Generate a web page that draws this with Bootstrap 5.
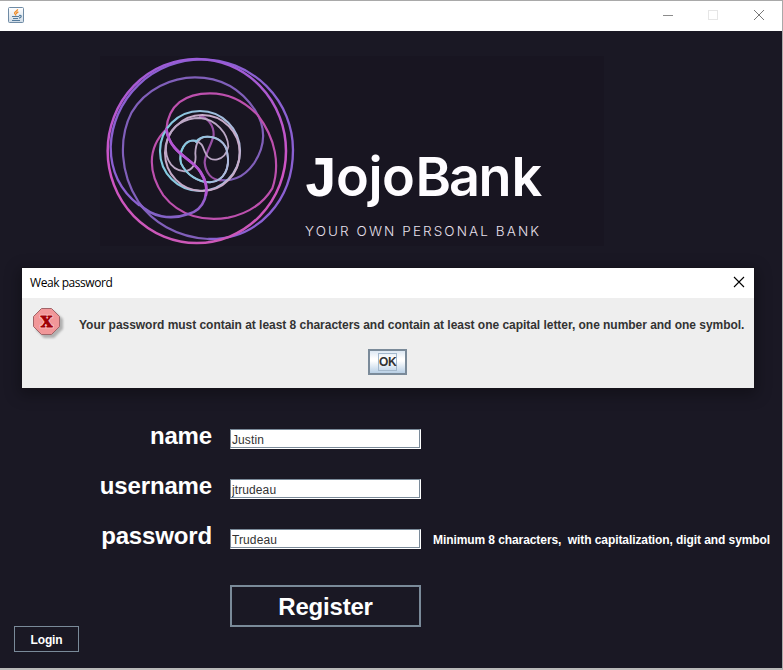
<!DOCTYPE html>
<html lang="en">
<head>
<meta charset="utf-8">
<meta name="viewport" content="width=device-width, initial-scale=1">
<title>JojoBank</title>
<link href="https://cdn.jsdelivr.net/npm/bootstrap@5.3.0/dist/css/bootstrap.min.css" rel="stylesheet">
<style>
  html, body { height: 100%; overflow: hidden; }
  body { font: 12px/16px "Liberation Sans", Arial, sans-serif; background: #1a1824; }
  .app-window { width: 783px; height: 670px; background: #1a1824; border-top: 1px solid #a9a9a9; border-right: 1px solid #a9a9a9; border-bottom: 2px solid #b9b9b9; }
  .app-title { height: 30px; flex: none; padding-bottom: 2px; }
  .brand-art { width: 504px; height: 190px; margin: 25px 0 0 100px; background: #181521; }
  .form-area { margin-top: 175px; padding-left: 20px; }
  .form-line { height: 50px; gap: 18px; }
  .form-line label { width: 192px; font-size: 24px; line-height: 28px; font-weight: 700; letter-spacing: -.15px; padding-top: 1px; }
  .metal-field { width: 191px; height: 20px; margin-top: 8px; padding: 2px 1px 0; font-size: 12px; line-height: 16px; letter-spacing: .1px; color: #333; background: #fff; border: 1px solid; border-color: #7a8a99 #fff #fff #7a8a99; border-radius: 0; box-shadow: inset -1px -1px #7a8a99; outline: 0; }
  .hint { margin: 11px 0 0 -6px; white-space: pre; letter-spacing: -.083px; }
  .metal-btn { border: 2px solid #7a8a99; border-radius: 0; background: transparent; color: #fff; font-weight: 700; padding: 0; }
  .btn-register { width: 191px; height: 42px; margin: 14px 0 0 230px; font-size: 24px; line-height: 38px; letter-spacing: -.2px; padding-top: 1px; }
  .btn-login { width: 65px; height: 26px; border-width: 1px; font-size: 12px; line-height: 24px; letter-spacing: -.15px; margin: -1px 0 0 14px; padding-top: 1px; }
  .alert-window { left: 22px; top: 268px; width: 732px; height: 120px; background: #eee; box-shadow: 0 0 0 1px #15131b, 0 4px 14px 3px rgba(0,0,0,.3); }
  .alert-title { height: 30px; padding: 0 9px 0 8px; font: 12px/16px "Open Sans", "Noto Sans", sans-serif; letter-spacing: -.45px; color: #000; }
  .alert-title svg { margin-top: -2px; }
  .alert-text { width: 665px; color: #333; padding-top: 19px; margin-left: 14px; white-space: nowrap; letter-spacing: -.034px; }
  .btn-ok { width: 39px; height: 26px; margin: 51px 0 0 -376px; color: #333; background: linear-gradient(#dde8f3, #fff 35%, #fff 45%, #b8cfe5); font-size: 12px; line-height: 14px; }
  .btn-ok span { border: 1px solid #a3b8cc; padding: 1px 0; width: 19px; height: 18px; letter-spacing: -.3px; }
</style>
</head>
<body>
<div class="app-window d-flex flex-column">
  <header class="app-title bg-white d-flex align-items-center justify-content-between">
    <svg class="ms-2" width="16" height="16" viewBox="0 0 16 16" aria-label="Java">
      <defs><linearGradient id="tile" x2="0" y2="1"><stop stop-color="#fff"/><stop offset="1" stop-color="#cfdbe6"/></linearGradient></defs>
      <rect x=".5" y=".5" width="15" height="15" rx="1" fill="url(#tile)" stroke="#6f8ba5"/>
      <path d="M9.600 2.200C9.600 4 6.600 4.400 6.600 6 6.600 7 8 7.400 7.700 8.600M10.400 4.800C8.600 5.400 8.200 6.200 8.700 7" fill="none" stroke="#f08a24" stroke-width="1.300"/>
      <path d="M4 9.500H11.200M5 11.500H10M4 13.500H12M11 8.500C14 7.600 14 10.600 11 11.200" fill="none" stroke="#547b9c" stroke-width="1.200"/>
    </svg>
    <svg width="120" height="20" viewBox="0 0 120 20" fill="none">
      <path d="M1 10.500H11" stroke="#8c8c8c"/>
      <rect x="46.500" y="5.500" width="9" height="9" stroke="#e6e6e6"/>
      <path d="M92 5L102 15M102 5L92 15" stroke="#777" stroke-width="1"/>
    </svg>
  </header>

  <svg class="brand-art flex-shrink-0" viewBox="100 56 504 190" role="img">
    <defs>
      <linearGradient id="outer" x1="0" y1="0" x2="0" y2="1"><stop stop-color="#9a5cd8"/><stop offset=".3" stop-color="#b857cd"/><stop offset=".6" stop-color="#cf53c4"/><stop offset="1" stop-color="#cc58b8"/></linearGradient>
      <linearGradient id="curl" gradientUnits="userSpaceOnUse" x1="300" y1="120" x2="200" y2="500"><stop stop-color="#b653b6"/><stop offset=".5" stop-color="#b656d6"/><stop offset="1" stop-color="#8262c6"/></linearGradient>
      <linearGradient id="cool" x1="0" y1="0" x2="1" y2="0"><stop stop-color="#80cbe0"/><stop offset="1" stop-color="#adb9dd"/></linearGradient>
    </defs>
    <g transform="translate(95 50) scale(.33333)" fill="none" stroke-width="6.500" stroke-linecap="round">
      <path d="M340 567C490 570 594 450 594 300A274 272 0 0 0 320 28A274 272 0 0 0 47 290C47 370 80 425 132 465" stroke="#8b60d2" stroke-width="7"/>
      <ellipse cx="305.500" cy="303" rx="267.500" ry="276" stroke="url(#outer)" stroke-width="7.500"/>
      <path d="M340 567C245 562 170 515 130 455C75 370 70 265 110 187C152 116 232 82 300 82C380 82 440 120 480 180C515 235 510 290 477 340C445 385 405 397 370 389" stroke="#805fba"/>
      <path d="M315 199C335 200 357 225 356 255C350 285 330 310 329 338C332 370 350 390 378 391" stroke="#9850a5"/>
      <path d="M214 238C155 295 160 370 205 436C255 500 330 515 400 503C460 490 505 460 532 415C556 345 542 265 488 195C445 150 395 130 345 130C270 130 220 165 214 238" stroke="#bd50ae"/>
      <path d="M214 238C225 310 290 325 316 365C355 425 325 480 280 492C225 512 170 500 132 462" stroke="url(#curl)" stroke-width="8"/>
      <circle cx="315" cy="303" r="120" stroke="url(#cool)"/>
      <ellipse cx="322" cy="309" rx="112" ry="114" stroke="#c7abc9" stroke-width="6"/>
      <path d="M303 274C270 262 250 305 258 340C275 375 310 397 345 397C390 394 405 350 397 310C393 275 363 260 337 260C317 260 302 275 301 310C305 340 294 361 268 364C220 360 205 310 217 270C230 225 270 204 315 204C363 208 399 250 400 290C390 335 345 340 332 310C325 300 326 278 303 274" stroke="#bba7c5" stroke-width="5.500"/>
      <path d="M303 272C270 266 250 305 258 340C275 375 310 397 345 397C390 394 405 350 397 310C393 275 363 260 337 260C317 260 309 266 303 276" stroke="url(#cool)" stroke-width="6"/>
      <path d="M214 238C225 310 290 325 316 365C333 390 337 415 333 435" stroke="#b456d3" stroke-width="8"/>
    </g>
    <g fill="#fefcff" font-family="Inter, sans-serif" font-weight="600" font-size="54">
      <text x="303.500" y="196" font-family="Liberation Mono, monospace" font-weight="700" font-size="58">J</text>
      <text x="336 368.500 382 415.500 449 478.500 511.500" y="196">ojoBank</text>
    </g>
    <text x="305" y="236" textLength="234" fill="#e8e0ec" font-family="Inter, sans-serif" font-weight="300" font-size="13.500">YOUR OWN PERSONAL BANK</text>
  </svg>

  <form class="form-area text-white" onsubmit="return false">
    <div class="form-line d-flex align-items-start"><label class="text-end" for="name">name</label><input class="metal-field" id="name" value="Justin"></div>
    <div class="form-line d-flex align-items-start"><label class="text-end" for="username">username</label><input class="metal-field" id="username" value="jtrudeau"></div>
    <div class="form-line d-flex align-items-start"><label class="text-end" for="password">password</label><input class="metal-field" id="password" value="Trudeau"><div class="hint fw-bold">Minimum 8 characters,  with capitalization, digit and symbol</div></div>
  </form>
  <button class="btn metal-btn btn-register flex-shrink-0">Register</button>
  <button class="btn metal-btn btn-login flex-shrink-0">Login</button>
</div>

<section class="alert-window position-absolute" role="alertdialog">
  <div class="alert-title bg-white d-flex align-items-center justify-content-between"><span>Weak password</span>
    <svg width="12" height="12" viewBox="0 0 12 12"><path d="M1 1L11 11M11 1L1 11" stroke="#000" stroke-width="1.100"/></svg>
  </div>
  <div class="d-flex align-items-start">
    <svg class="flex-shrink-0" width="33" height="34" viewBox="0 0 33 34" style="margin:9px 0 0 10px">
      <defs><filter id="soft"><feGaussianBlur stdDeviation="1.2"/></filter></defs>
      <path d="M11 4H22L31 12V22L22 31H12L4 23V12Z" fill="#888" opacity=".6" filter="url(#soft)"/>
      <path d="M9.500 1.500H19.500L27.500 9.500V19.500L19.500 27.500H9.500L1.500 19.500V9.500Z" fill="#f19799" stroke="#a06468"/>
      <g text-anchor="middle" font-family="DejaVu Serif, serif" font-weight="700" font-size="15">
        <text x="14.500" y="20" fill="#ffc6c6" stroke="#ffc6c6" stroke-width="2.500">X</text>
        <text x="14.500" y="20" fill="#a00006" stroke="#a00006" stroke-width=".9">X</text>
      </g>
    </svg>
    <div class="alert-text fw-bold">Your password must contain at least 8 characters and contain at least one capital letter, one number and one symbol.</div>
    <button class="btn metal-btn btn-ok flex-shrink-0 d-flex align-items-center justify-content-center"><span>OK</span></button>
  </div>
</section>
<script src="https://cdn.jsdelivr.net/npm/bootstrap@5.3.0/dist/js/bootstrap.bundle.min.js"></script>
</body>
</html>
